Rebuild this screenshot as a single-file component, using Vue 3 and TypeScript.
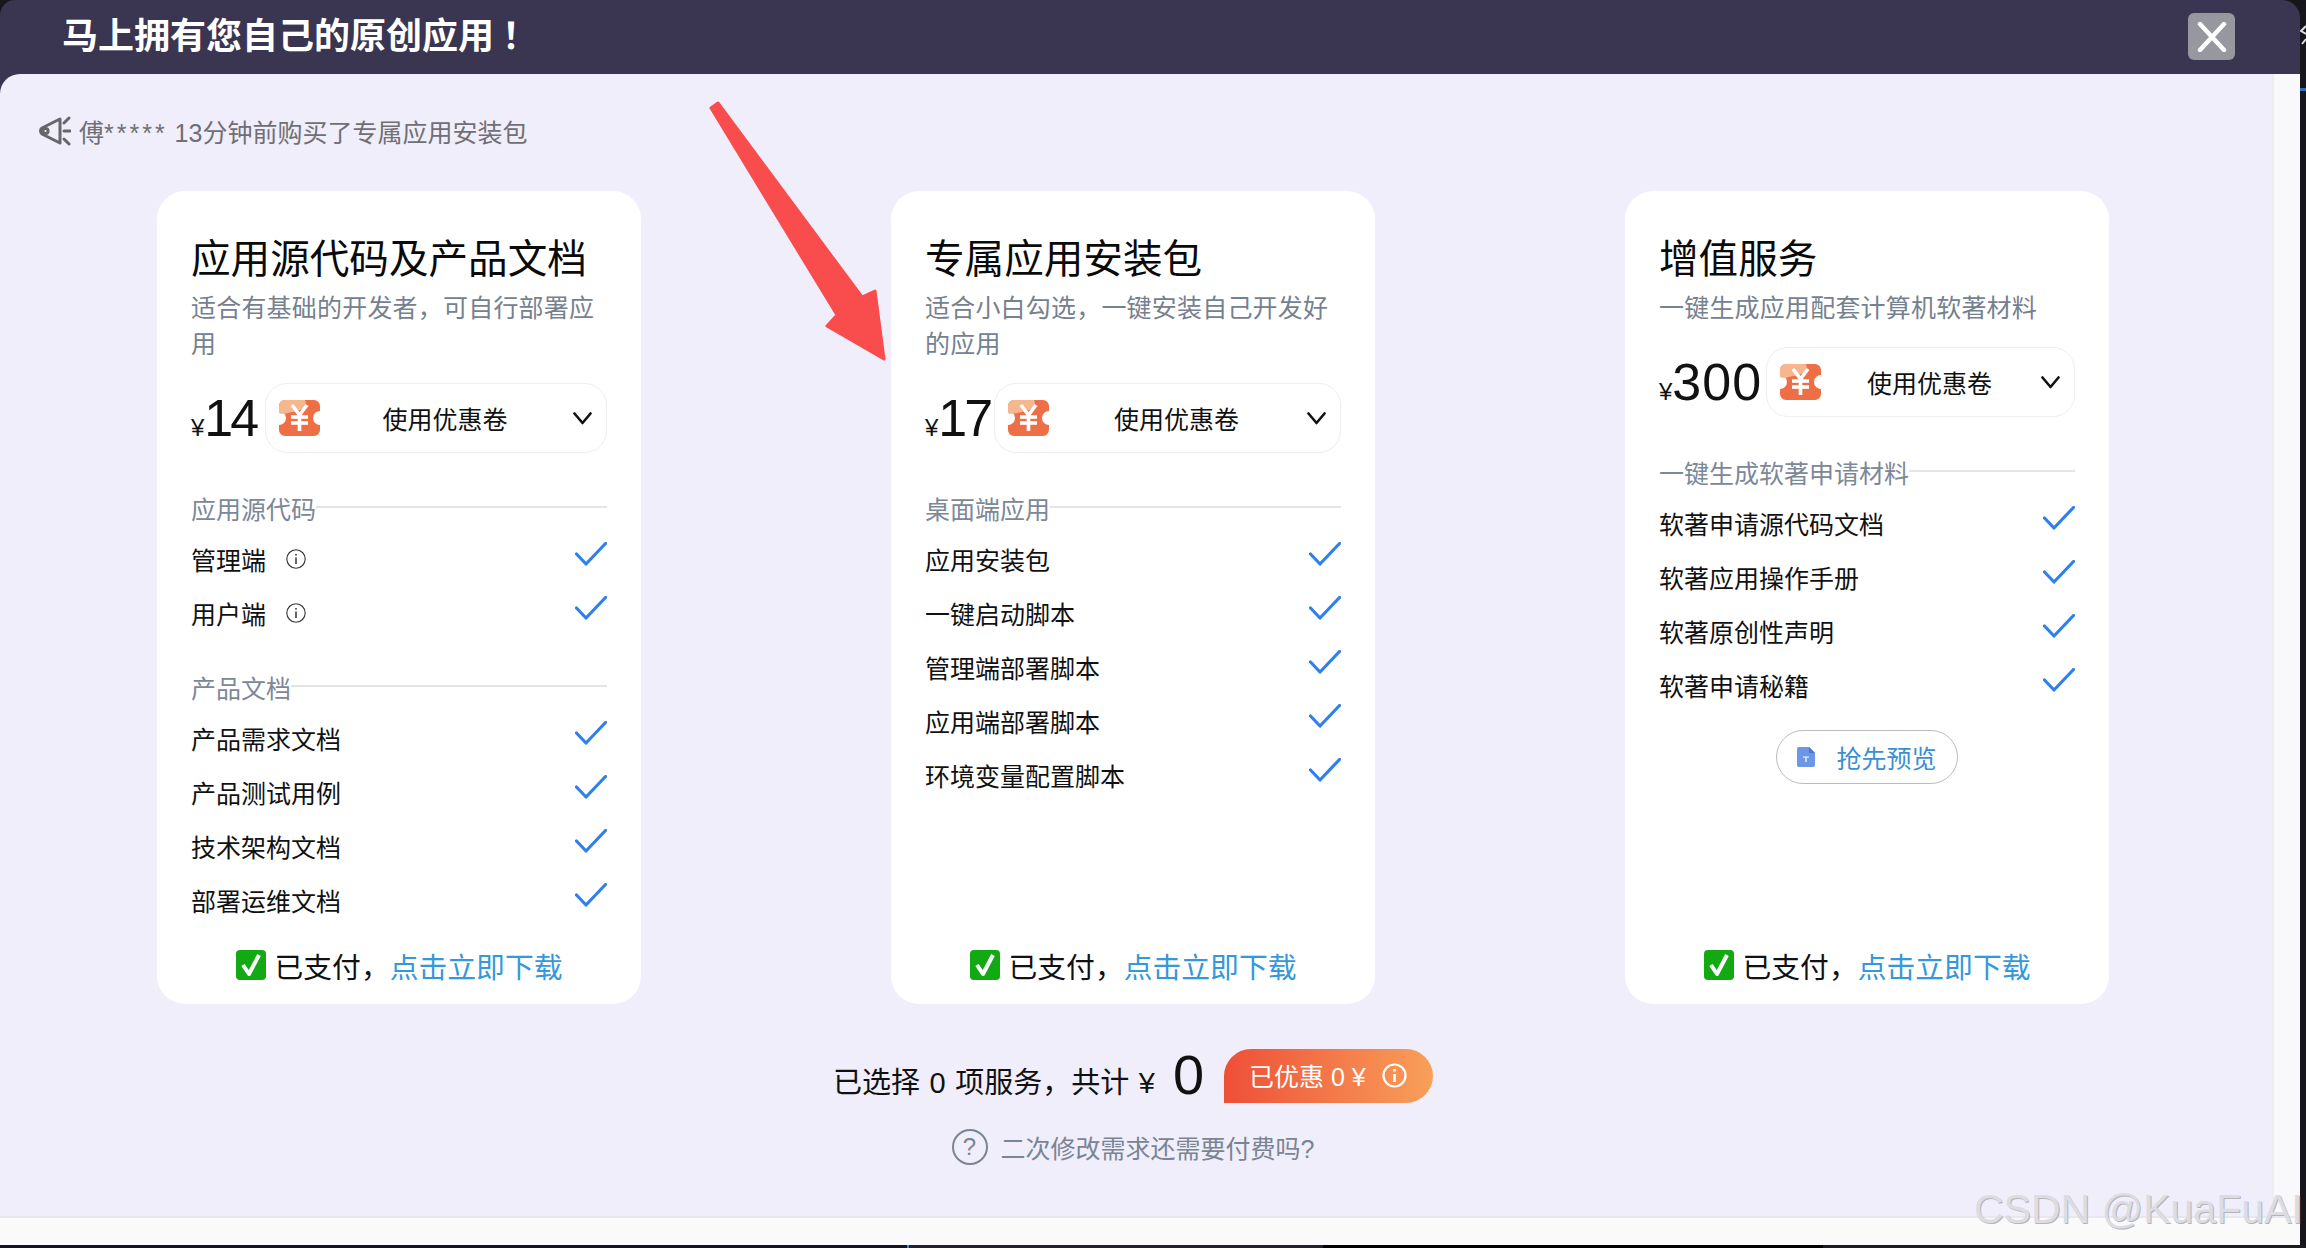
<template>
  <div class="screen">
    <div class="window-row">
      <div class="modal">
        <header class="modal-head">
          <h1 class="modal-title">马上拥有您自己的原创应用<span class="bang">&#xFF01;</span></h1>
          <button class="close-btn" type="button" aria-label="关闭">
            <svg width="30" height="30" viewBox="0 0 30 30">
              <path d="M3 2 L27 28 M27 2 L3 28" stroke="#fff" stroke-width="4.4" stroke-linecap="round" fill="none" />
            </svg>
          </button>
        </header>

        <div class="modal-body">
          <main class="content">
            <div class="notice">
              <svg class="speaker" width="32" height="30" viewBox="0 0 32 30" fill="none" stroke="#66666b" stroke-width="3" stroke-linecap="round" stroke-linejoin="round">
                <path d="M21 3 L3 12 C1 13.5 1 16.5 3 18 L21 27 Z" />
                <circle cx="6.5" cy="15" r="2.6" />
                <path d="M25 7 L30 2 M25 15 L31 15 M25 23 L30 28" />
              </svg>
              <span>傅<span class="stars">*****</span> 13分钟前购买了专属应用安装包</span>
            </div>

            <div class="cards">
              <section v-for="card in cards" :key="card.title" class="card">
                <h2 class="card-title">{{ card.title }}</h2>
                <p class="card-sub">{{ card.desc }}</p>

                <div class="price-row">
                  <div class="price" :style="{ width: card.priceWidth + 'px' }">
                    <span class="yen">¥</span><span class="amount" :style="{ letterSpacing: card.tracking + 'px' }">{{ card.price }}</span>
                  </div>
                  <div class="coupon-select">
                    <svg class="coupon-icon" width="41" height="36" viewBox="0 0 41 36">
                      <path d="M6 0 H35 A6 6 0 0 1 41 6 V11 A7 7 0 0 0 41 25 V30 A6 6 0 0 1 35 36 H6 A6 6 0 0 1 0 30 V25 A7 7 0 0 0 0 11 V6 A6 6 0 0 1 6 0 Z" fill="#ee6f45" />
                      <path d="M6 0 H26 C29 6 23 11 14 12 C8 13 3 15 0 13 V6 A6 6 0 0 1 6 0 Z" fill="#f6b78f" />
                      <g stroke="#fff" stroke-width="3.6" fill="none">
                        <line x1="13" y1="5" x2="20.5" y2="15" />
                        <line x1="28" y1="5" x2="20.5" y2="15" />
                        <line x1="20.5" y1="14" x2="20.5" y2="31" />
                        <line x1="12" y1="17" x2="29" y2="17" />
                        <line x1="12" y1="23" x2="29" y2="23" />
                      </g>
                    </svg>
                    <span class="coupon-text">使用优惠卷</span>
                    <svg width="19" height="13" viewBox="0 0 19 13" fill="none">
                      <path d="M1.5 1.5 L9.5 11 L17.5 1.5" stroke="#111" stroke-width="2.6" stroke-linecap="round" stroke-linejoin="round" />
                    </svg>
                  </div>
                </div>

                <div v-for="group in card.groups" :key="group.label" class="group">
                  <div class="group-label">
                    <span>{{ group.label }}</span>
                    <i class="group-line"></i>
                  </div>
                  <div v-for="item in group.items" :key="item.name" class="row">
                    <span class="row-name">{{ item.name }}</span>
                    <svg v-if="item.info" class="info" width="20" height="20" viewBox="0 0 20 20" fill="none" stroke="#333" stroke-width="1.1">
                      <circle cx="10" cy="10" r="9.2" />
                      <line x1="10" y1="8.5" x2="10" y2="15" stroke-width="1.5" />
                      <line x1="10" y1="5" x2="10" y2="6.6" stroke-width="1.6" />
                    </svg>
                    <svg class="check" width="32" height="24" viewBox="0 0 32 24" fill="none">
                      <path d="M1.5 12 L11 22 L30.5 1.5" stroke="#2f80ed" stroke-width="3.2" stroke-linecap="round" stroke-linejoin="round" />
                    </svg>
                  </div>
                </div>

                <button v-if="card.preview" class="preview-btn" type="button">
                  <svg width="18" height="20" viewBox="0 0 18 20">
                    <path d="M2 0 H12 L18 6 V18 A2 2 0 0 1 16 20 H2 A2 2 0 0 1 0 18 V2 A2 2 0 0 1 2 0 Z" fill="#6c97e6" />
                    <path d="M12 0 L18 6 H12 Z" fill="#4f76c4" />
                    <path d="M6 10 H12 M9 10 V15" stroke="#fff" stroke-width="1.2" fill="none" />
                  </svg>
                  <span>抢先预览</span>
                </button>

                <div class="paid">
                  <svg class="paid-icon" width="30" height="30" viewBox="0 0 30 30">
                    <rect x="0" y="0" width="30" height="30" rx="4" fill="#12a912" />
                    <path d="M7 15 L13 24 L23 5" stroke="#fff" stroke-width="4" fill="none" stroke-linejoin="round" />
                  </svg>
                  <span>已支付&#xFF0C;</span><a class="paid-link">点击立即下载</a>
                </div>
              </section>
            </div>

            <div class="summary">
              <div class="summary-text">
                <span class="summary-label">已选择 0 项服务&#xFF0C;共计 ¥</span>
                <span class="total">0</span>
              </div>
              <div class="saved">
                <span>已优惠 0 ¥</span>
                <svg width="25" height="25" viewBox="0 0 25 25" fill="none" stroke="#fff">
                  <circle cx="12.5" cy="12.5" r="11" stroke-width="2.2" />
                  <line x1="12.5" y1="11" x2="12.5" y2="19" stroke-width="2.6" />
                  <line x1="12.5" y1="6" x2="12.5" y2="8.4" stroke-width="2.6" />
                </svg>
              </div>
            </div>

            <div class="faq">
              <span class="faq-mark">?</span>
              <span>二次修改需求还需要付费吗?</span>
            </div>
          </main>
          <div class="side-strip"></div>
        </div>

        <div class="foot-strip"></div>
      </div>
      <div class="edge">
        <svg class="edge-mark" width="6" height="22" viewBox="0 0 6 22" fill="none" stroke="#ddd" stroke-width="2">
          <path d="M6 2 L1 7 L6 10 M6 15 L2 20" />
        </svg>
        <i class="edge-tick"></i>
      </div>
    </div>

    <div class="taskbar">
      <i class="seg seg-a"></i>
      <i class="seg seg-tick"></i>
      <i class="seg seg-b"></i>
      <i class="seg seg-c"></i>
      <i class="seg seg-d"></i>
    </div>

    <!-- 截图上的批注箭头 -->
    <svg class="arrow" width="195" height="275" viewBox="700 95 195 275">
      <path d="M711 108 L718 103 L862 297 L875 291 L884 359 L827 326 L837 315 Z" fill="#f94c4c" stroke="#f94c4c" stroke-width="3" stroke-linejoin="round" />
    </svg>

    <div class="watermark">CSDN @KuaFuAI</div>
  </div>
</template>

<script setup lang="ts">
interface Item {
  name: string
  info?: boolean
}

interface Group {
  label: string
  items: Item[]
}

interface Card {
  title: string
  desc: string
  price: number
  priceWidth: number
  tracking: number
  groups: Group[]
  preview?: boolean
}

const names = (list: string[]): Item[] => list.map((name) => ({ name }))

const cards: Card[] = [
  {
    title: '应用源代码及产品文档',
    desc: '适合有基础的开发者\uFF0C可自行部署应用',
    price: 14,
    priceWidth: 74,
    tracking: -3,
    groups: [
      {
        label: '应用源代码',
        items: [
          { name: '管理端', info: true },
          { name: '用户端', info: true }
        ]
      },
      {
        label: '产品文档',
        items: names(['产品需求文档', '产品测试用例', '技术架构文档', '部署运维文档'])
      }
    ]
  },
  {
    title: '专属应用安装包',
    desc: '适合小白勾选\uFF0C一键安装自己开发好的应用',
    price: 17,
    priceWidth: 69,
    tracking: -3,
    groups: [
      {
        label: '桌面端应用',
        items: names(['应用安装包', '一键启动脚本', '管理端部署脚本', '应用端部署脚本', '环境变量配置脚本'])
      }
    ]
  },
  {
    title: '增值服务',
    desc: '一键生成应用配套计算机软著材料',
    price: 300,
    priceWidth: 107,
    tracking: 1,
    preview: true,
    groups: [
      {
        label: '一键生成软著申请材料',
        items: names(['软著申请源代码文档', '软著应用操作手册', '软著原创性声明', '软著申请秘籍'])
      }
    ]
  }
]
</script>

<style>
html,
body {
  margin: 0;
  padding: 0;
}
</style>

<style scoped>
.screen {
  position: relative;
  width: 2306px;
  height: 1248px;
  overflow: hidden;
  display: flex;
  flex-direction: column;
  background: #17161d;
  font-family: "Liberation Sans", "Noto Sans CJK SC", sans-serif;
  color: #111;
}

.window-row {
  flex: 1;
  display: flex;
  min-height: 0;
}

.modal {
  width: 2300px;
  display: flex;
  flex-direction: column;
  background: #3a3551;
  border-radius: 15px 18px 0 0;
  overflow: hidden;
}

.modal-head {
  height: 74px;
  flex: none;
  display: flex;
  align-items: center;
  justify-content: space-between;
  padding: 0 65px 0 62px;
}

.modal-title {
  margin: 0;
  font-size: 36px;
  line-height: 74px;
  font-weight: 700;
  color: #fff;
}

.bang {
  margin-left: 8px;
}

.close-btn {
  width: 47px;
  height: 47px;
  margin-top: -1px;
  padding: 0;
  border: 0;
  border-radius: 6px;
  background: #97979f;
  display: flex;
  align-items: center;
  justify-content: center;
}

.modal-body {
  flex: 1;
  display: flex;
  min-height: 0;
}

.content {
  width: 2272px;
  background: #f0eefa;
  border-top-left-radius: 20px;
  box-sizing: border-box;
}

.side-strip {
  flex: 1;
  background: #f9f9fb;
  border-left: 2px solid #ececf2;
}

.foot-strip {
  height: 29px;
  flex: none;
  background: #fafafa;
  border-top: 2px solid #e8e7ee;
  box-sizing: border-box;
}

.notice {
  height: 35px;
  margin-top: 39px;
  padding-left: 39px;
  display: flex;
  align-items: center;
  gap: 8px;
  font-size: 25px;
  color: #6f6f75;
}

.speaker {
  flex: none;
}

.stars {
  letter-spacing: 3px;
}

.cards {
  display: flex;
  gap: 250px;
  margin-top: 43px;
  padding-left: 157px;
}

.card {
  width: 484px;
  height: 813px;
  box-sizing: border-box;
  padding: 40px 34px 19px;
  background: #fff;
  border-radius: 28px;
  display: flex;
  flex-direction: column;
}

.card-title {
  margin: 0;
  font-size: 39.6px;
  line-height: 56px;
  font-weight: 400;
  color: #0a0a0a;
}

.card-sub {
  margin: 3px 0 0;
  font-size: 25px;
  line-height: 36px;
  letter-spacing: 0.2px;
  color: #75818f;
}

.price-row {
  display: flex;
  align-items: center;
  margin-top: 21px;
}

.price {
  flex: none;
  display: flex;
  align-items: baseline;
}

.yen {
  font-size: 24px;
}

.amount {
  font-size: 52px;
  line-height: 70px;
}

.coupon-select {
  flex: 1;
  height: 70px;
  box-sizing: border-box;
  padding: 0 14px 0 13px;
  display: flex;
  align-items: center;
  border: 1px solid #eeeef0;
  border-radius: 22px;
}

.coupon-icon {
  flex: none;
}

.coupon-text {
  flex: 1;
  padding-right: 3px;
  text-align: center;
  font-size: 25px;
  color: #111;
}

.group {
  margin-top: 29px;
}

.price-row + .group {
  margin-top: 37px;
}

.group-label {
  height: 35px;
  margin-bottom: 7px;
  display: flex;
  align-items: center;
  font-size: 25px;
  color: #7c8798;
}

.group-line {
  flex: 1;
  height: 2px;
  margin-top: -1px;
  background: #e2e4e8;
}

.row {
  height: 54px;
  display: flex;
  align-items: center;
  font-size: 25px;
  color: #111;
}

.info {
  margin-left: 20px;
}

.check {
  margin-left: auto;
  margin-bottom: 10px;
}

.preview-btn {
  align-self: center;
  width: 182px;
  height: 54px;
  margin-top: 18px;
  padding: 0;
  background: #fff;
  border: 1px solid #bcbcbc;
  border-radius: 27px;
  display: flex;
  align-items: center;
  justify-content: center;
  gap: 21px;
  font-family: inherit;
  font-size: 25px;
  color: #3a8fd0;
}

.paid {
  margin-top: auto;
  height: 40px;
  display: flex;
  align-items: center;
  justify-content: center;
  font-size: 28.8px;
  color: #111;
}

.paid-icon {
  margin-right: 9px;
  flex: none;
}

.paid-link {
  color: #3498db;
}

.summary {
  margin-top: 45px;
  padding-right: 6px;
  display: flex;
  justify-content: center;
  gap: 20px;
}

.summary-text {
  height: 54px;
  display: flex;
  align-items: flex-start;
  gap: 18px;
  font-size: 29px;
}

.summary-label {
  margin-top: 6px;
  line-height: 56px;
  word-spacing: 1.5px;
}

.total {
  margin-top: 1px;
  font-size: 56px;
  line-height: 50px;
}

.saved {
  width: 209px;
  height: 54px;
  box-sizing: border-box;
  padding-left: 25px;
  padding-bottom: 2px;
  display: flex;
  align-items: center;
  gap: 16px;
  border-radius: 27px 27px 27px 0;
  background: linear-gradient(90deg, #ee4f37, #f8a05a);
  font-size: 25px;
  color: #fff;
}

.faq {
  margin-top: 26px;
  padding-right: 6px;
  display: flex;
  justify-content: center;
  align-items: center;
  gap: 13px;
  font-size: 25px;
  color: #7a8494;
}

.faq-mark {
  width: 36px;
  height: 36px;
  box-sizing: border-box;
  border: 2px solid #7a8494;
  border-radius: 50%;
  display: flex;
  align-items: center;
  justify-content: center;
  font-size: 24px;
}

.edge {
  flex: 1;
  position: relative;
  overflow: hidden;
}

.edge-mark {
  position: absolute;
  left: 0;
  top: 24px;
}

.edge-tick {
  position: absolute;
  left: 0;
  right: 0;
  top: 88px;
  height: 3px;
  background: #2f6fb5;
}

.taskbar {
  height: 3px;
  flex: none;
  display: flex;
}

.seg {
  display: block;
  height: 3px;
}

.seg-a {
  width: 907px;
  background: #15151f;
}

.seg-tick {
  width: 2px;
  background: #3f8fdc;
}

.seg-b {
  width: 414px;
  background: #22222c;
}

.seg-c {
  width: 500px;
  background: #000;
}

.seg-d {
  flex: 1;
  background: #1b1b22;
}

.arrow {
  position: absolute;
  left: 700px;
  top: 95px;
}

.watermark {
  position: absolute;
  left: 1974px;
  top: 1186px;
  font-size: 41px;
  line-height: 46px;
  white-space: nowrap;
  color: #dcdce2;
  text-shadow: 1px 1px 0 #b4b4ba;
}
</style>
